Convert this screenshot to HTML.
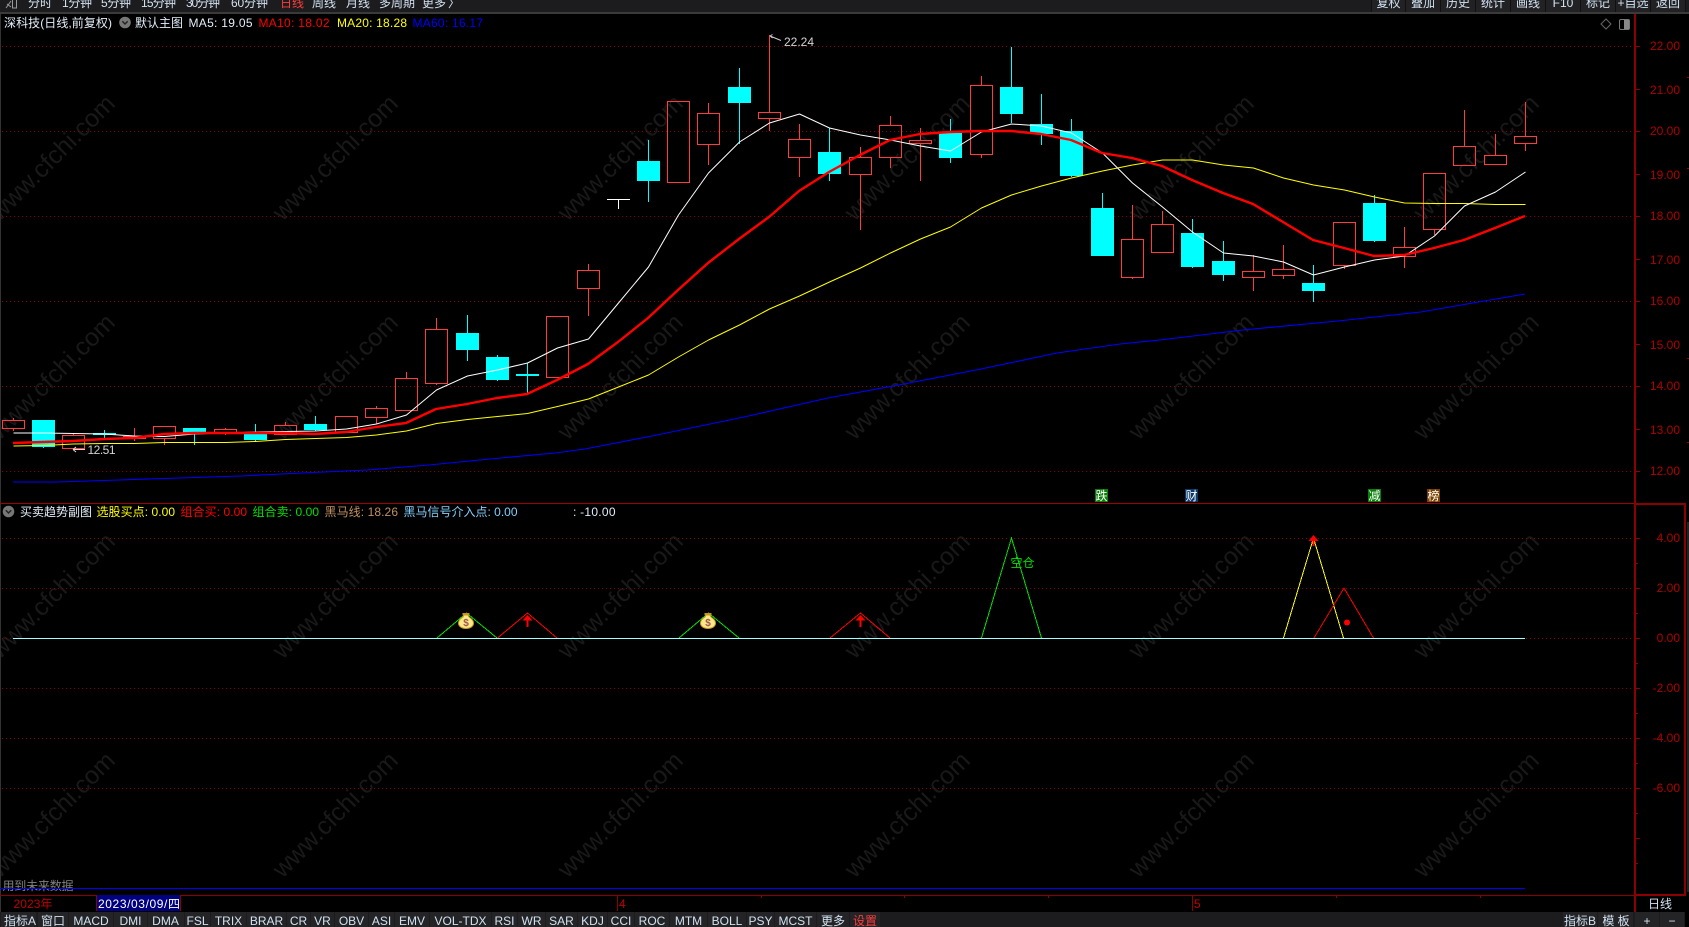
<!DOCTYPE html>
<html lang="zh">
<head>
<meta charset="utf-8">
<title>深科技</title>
<style>
html,body{margin:0;padding:0;background:#000;width:1689px;height:927px;overflow:hidden}
svg{display:block;position:absolute;left:0;top:0}
text{font-family:"Liberation Sans","Noto Sans CJK SC",sans-serif;font-size:12px;white-space:pre}
.wm text{font-size:25px;fill:#191919;text-anchor:middle}
.ax text{fill:#b00000;text-anchor:end}
.btn text{fill:#d2e2f2;text-anchor:middle}
.crisp{shape-rendering:crispEdges}
</style>
</head>
<body>
<svg width="1689" height="927" viewBox="0 0 1689 927" xmlns="http://www.w3.org/2000/svg">
<rect width="1689" height="927" fill="#000"/>

<!-- watermark -->
<g class="wm">
<text x="52" y="166" transform="rotate(-45 52 157.5)">www.cfchi.com</text>
<text x="335" y="166" transform="rotate(-45 335 157.5)">www.cfchi.com</text>
<text x="620" y="166" transform="rotate(-45 620 157.5)">www.cfchi.com</text>
<text x="907" y="166" transform="rotate(-45 907 157.5)">www.cfchi.com</text>
<text x="1191" y="166" transform="rotate(-45 1191 157.5)">www.cfchi.com</text>
<text x="1476" y="166" transform="rotate(-45 1476 157.5)">www.cfchi.com</text>
<text x="52" y="385" transform="rotate(-45 52 376.5)">www.cfchi.com</text>
<text x="335" y="385" transform="rotate(-45 335 376.5)">www.cfchi.com</text>
<text x="620" y="385" transform="rotate(-45 620 376.5)">www.cfchi.com</text>
<text x="907" y="385" transform="rotate(-45 907 376.5)">www.cfchi.com</text>
<text x="1191" y="385" transform="rotate(-45 1191 376.5)">www.cfchi.com</text>
<text x="1476" y="385" transform="rotate(-45 1476 376.5)">www.cfchi.com</text>
<text x="52" y="604" transform="rotate(-45 52 595.5)">www.cfchi.com</text>
<text x="335" y="604" transform="rotate(-45 335 595.5)">www.cfchi.com</text>
<text x="620" y="604" transform="rotate(-45 620 595.5)">www.cfchi.com</text>
<text x="907" y="604" transform="rotate(-45 907 595.5)">www.cfchi.com</text>
<text x="1191" y="604" transform="rotate(-45 1191 595.5)">www.cfchi.com</text>
<text x="1476" y="604" transform="rotate(-45 1476 595.5)">www.cfchi.com</text>
<text x="52" y="823" transform="rotate(-45 52 814.5)">www.cfchi.com</text>
<text x="335" y="823" transform="rotate(-45 335 814.5)">www.cfchi.com</text>
<text x="620" y="823" transform="rotate(-45 620 814.5)">www.cfchi.com</text>
<text x="907" y="823" transform="rotate(-45 907 814.5)">www.cfchi.com</text>
<text x="1191" y="823" transform="rotate(-45 1191 814.5)">www.cfchi.com</text>
<text x="1476" y="823" transform="rotate(-45 1476 814.5)">www.cfchi.com</text>
</g>

<!-- top bar -->
<rect x="0" y="0" width="1689" height="12" fill="#1c1c1e" class="crisp"/>
<rect x="0" y="12" width="1689" height="2" fill="#3a3a3a" class="crisp"/>
<rect x="0" y="14" width="1" height="898" fill="#333" class="crisp"/>
<path d="M6 8L11 1M7 4L11 7M12.5 0V8H16.5V0" fill="none" stroke="#999" stroke-width="1"/>
<g fill="#d2e2f2">
<text x="28" y="7">分时</text>
<text x="62" y="7" textLength="30">1分钟</text>
<text x="101" y="7" textLength="30">5分钟</text>
<text x="141" y="7" textLength="35">15分钟</text>
<text x="186" y="7" textLength="34">30分钟</text>
<text x="231" y="7" textLength="37">60分钟</text>
<text x="280" y="7" fill="#ff3c3c">日线</text>
<text x="312" y="7">周线</text>
<text x="346" y="7">月线</text>
<text x="379" y="7">多周期</text>
<text x="422" y="7">更多</text>
<text x="448" y="7">〉</text>
</g>
<g class="crisp">
<rect x="1372" y="0" width="313" height="12" fill="#222224"/>
<path d="M1371.5 0V12M1405.5 0V12M1440.5 0V12M1475.5 0V12M1510.5 0V12M1545.5 0V12M1580.5 0V12M1615.5 0V12M1650.5 0V12M1685.5 0V12" stroke="#101010" stroke-width="1" fill="none"/>
</g>
<g class="btn">
<text x="1388.5" y="7">复权</text>
<text x="1423" y="7">叠加</text>
<text x="1458" y="7">历史</text>
<text x="1493" y="7">统计</text>
<text x="1528" y="7">画线</text>
<text x="1563" y="7">F10</text>
<text x="1598" y="7">标记</text>
<text x="1633" y="7">+自选</text>
<text x="1668" y="7">返回</text>
</g>

<!-- header -->
<text x="4" y="27" fill="#e2eefa" textLength="108">深科技(日线,前复权)</text>
<circle cx="125" cy="22.5" r="5.8" fill="#777"/>
<path d="M122.3 21.3L125 24L127.7 21.3" fill="none" stroke="#222" stroke-width="1.4"/>
<text x="135" y="27" fill="#e2eefa">默认主图</text>
<text x="188.5" y="27" fill="#e2eefa" textLength="64">MA5: 19.05</text>
<text x="258.5" y="27" fill="#ff0000" textLength="71">MA10: 18.02</text>
<text x="337" y="27" fill="#ffff00" textLength="70">MA20: 18.28</text>
<text x="412.5" y="27" fill="#0000ff" textLength="70.5">MA60: 16.17</text>

<!-- diamond + panel icons -->
<path d="M1606 19L1611 24L1606 29L1601 24Z" fill="none" stroke="#666" stroke-width="1"/>
<rect x="1619.5" y="19.5" width="10" height="10" rx="1.5" fill="none" stroke="#777" stroke-width="1"/>
<rect x="1624" y="20" width="5" height="9" fill="#888"/>

<!-- grids -->
<g stroke="#8a0000" stroke-width="1" stroke-dasharray="1 3" fill="none" class="crisp">
<path d="M2 46.5H1634M2 131.5H1634M2 216.5H1634M2 301.5H1634M2 386.5H1634M2 471.5H1634"/>
<path d="M2 538.5H1634M2 588.5H1634M2 638.5H1634M2 688.5H1634M2 738.5H1634M2 788.5H1634"/>
</g>

<!-- red hollow candles -->
<path class="crisp" fill="none" stroke="#ff3c3c" stroke-width="1" d="
M13.5 418V420M13.5 429V431M2.5 420.5H24.5V428.5H2.5Z
M73.5 433V435M62.5 435.5H84.5V448.5H62.5Z
M134.5 428V436M134.5 439V441M123.5 436.5H145.5V438.5H123.5Z
M164.5 438V445M153.5 426.5H175.5V438.5H153.5Z
M225.5 428V429M225.5 433V435M214.5 429.5H236.5V432.5H214.5Z
M285.5 422V425M274.5 425.5H296.5V434.5H274.5Z
M335.5 416.5H357.5V432.5H335.5Z
M376.5 406V408M376.5 417V424M365.5 408.5H387.5V417.5H365.5Z
M406.5 372V378M395.5 378.5H417.5V410.5H395.5Z
M436.5 318V329M436.5 384V385M425.5 329.5H447.5V383.5H425.5Z
M546.5 316.5H568.5V377.5H546.5Z
M588.5 264V270M588.5 289V316M577.5 270.5H599.5V288.5H577.5Z
M667.5 101.5H689.5V182.5H667.5Z
M708.5 103V113M708.5 145V165M697.5 113.5H719.5V144.5H697.5Z
M769.5 35V112M769.5 119V131M758.5 112.5H780.5V118.5H758.5Z
M799.5 124V139M799.5 158V177M788.5 139.5H810.5V157.5H788.5Z
M860.5 147V157M860.5 175V230M849.5 157.5H871.5V174.5H849.5Z
M890.5 116V125M890.5 158V168M879.5 125.5H901.5V157.5H879.5Z
M920.5 128V140M920.5 144V181M909.5 140.5H931.5V143.5H909.5Z
M981.5 76V85M981.5 155V158M970.5 85.5H992.5V154.5H970.5Z
M1132.5 205V239M1132.5 278V279M1121.5 239.5H1143.5V277.5H1121.5Z
M1162.5 211V224M1151.5 224.5H1173.5V252.5H1151.5Z
M1253.5 255V271M1253.5 278V291M1242.5 271.5H1264.5V277.5H1242.5Z
M1283.5 245V269M1283.5 276V279M1272.5 269.5H1294.5V275.5H1272.5Z
M1344.5 266V269M1333.5 222.5H1355.5V265.5H1333.5Z
M1404.5 227V247M1404.5 257V268M1393.5 247.5H1415.5V256.5H1393.5Z
M1434.5 230V235M1423.5 173.5H1445.5V229.5H1423.5Z
M1464.5 110V146M1453.5 146.5H1475.5V165.5H1453.5Z
M1495.5 134V155M1484.5 155.5H1506.5V164.5H1484.5Z
M1525.5 102V136M1525.5 144V151M1514.5 136.5H1536.5V143.5H1514.5Z"/>

<!-- cyan wicks -->
<path class="crisp" fill="none" stroke="#00ffff" stroke-width="1" d="
M43.5 420V448M104.5 430V439M194.5 428V445M255.5 424V442M315.5 416V431
M467.5 315V361M497.5 355V381M527.5 363V393M648.5 140V202M739.5 68V144
M829.5 128V181M950.5 119V163M1011.5 47V123M1041.5 94V145M1071.5 119V177
M1102.5 193V256M1192.5 219V268M1223.5 241V281M1313.5 265V302M1374.5 195V242"/>
<!-- cyan bodies -->
<g fill="#00ffff" class="crisp">
<rect x="32" y="420" width="23" height="27"/>
<rect x="93" y="433" width="23" height="2"/>
<rect x="183" y="428" width="23" height="5"/>
<rect x="244" y="434" width="23" height="6"/>
<rect x="304" y="424" width="23" height="6"/>
<rect x="456" y="333" width="23" height="17"/>
<rect x="486" y="357" width="23" height="23"/>
<rect x="516" y="374" width="23" height="2"/>
<rect x="637" y="161" width="23" height="20"/>
<rect x="728" y="87" width="23" height="16"/>
<rect x="818" y="152" width="23" height="22"/>
<rect x="939" y="133" width="23" height="25"/>
<rect x="1000" y="87" width="23" height="27"/>
<rect x="1030" y="124" width="23" height="10"/>
<rect x="1060" y="131" width="23" height="45"/>
<rect x="1091" y="208" width="23" height="48"/>
<rect x="1181" y="233" width="23" height="34"/>
<rect x="1212" y="261" width="23" height="14"/>
<rect x="1302" y="283" width="23" height="8"/>
<rect x="1363" y="203" width="23" height="38"/>
</g>
<!-- T doji -->
<path class="crisp" d="M607 199.5H630M618.5 199V209" stroke="#fff" stroke-width="1" fill="none"/>

<!-- MA lines -->
<polyline fill="none" stroke="#0000ff" stroke-width="1.1" stroke-linejoin="round" points="13,482 57,482 119,480 180,478 241,476 302,473 367,470 429,465 490,459 555,453 585,449 652,436 744,417 828,398 904,384 981,369 1057,353 1120,344 1160,340 1243,330 1338,321 1421,312 1490,300 1525,294"/>
<polyline fill="none" stroke="#ffff00" stroke-width="1" stroke-linejoin="round" points="13.5,446 43.5,445.5 73.5,444 104.5,443.5 134.5,443.5 164.5,442.5 194.5,442.5 225.5,442.5 255.5,441.5 285.5,439.5 315.5,438.5 346.5,437.5 376.5,435 406.5,431 436.5,423.5 467.5,419.5 497.5,416.5 527.5,413.5 557.5,406.5 588.5,399 618.5,387 648.5,375 678.5,357 708.5,340 739.5,325 769.5,309 799.5,296 829.5,282 860.5,268 890.5,253 920.5,239 950.5,227 981.5,208 1011.5,195 1041.5,186 1071.5,178 1102.5,171 1132.5,165 1162.5,160 1192.5,160 1223.5,165 1253.5,168 1283.5,178 1313.5,185 1344.5,190 1374.5,197 1404.5,203 1434.5,203.5 1464.5,203.5 1495.5,204.5 1525.5,204.5"/>
<polyline fill="none" stroke="#ffffff" stroke-width="1" stroke-linejoin="round" points="13.5,433 43.5,433 73.5,433.5 104.5,434 134.5,436 164.5,436.5 194.5,434 225.5,433 255.5,432 285.5,431.5 315.5,431 346.5,429 376.5,424 406.5,415 436.5,390 467.5,376 497.5,370 527.5,363 557.5,348 588.5,339 618.5,303 648.5,267 678.5,215 708.5,173 739.5,142 769.5,123 799.5,114 829.5,128 860.5,135 890.5,140 920.5,146 950.5,151 981.5,132 1011.5,124 1041.5,126 1071.5,133 1102.5,153 1132.5,183 1162.5,207 1192.5,232 1223.5,253 1253.5,256 1283.5,262 1313.5,275 1344.5,267 1374.5,260 1404.5,256 1434.5,236 1464.5,206 1495.5,192 1525.5,172"/>
<polyline fill="none" stroke="#ff0000" stroke-width="2.4" stroke-linejoin="round" points="13,443 43,442 73,441 104,439 134,438 164,434 194,433 225,433 255,433 285,433 315,434 346,432 376,427 406,423 436,409 467,404 497,398 527,394 557,380 588,364 618,342 648,318 678,290 708,263 739,239 769,217 799,191 829,172 860,155 890,140 920,134 950,132 981,131 1011,131 1041,134 1071,140 1102,153 1132,158 1162,166 1192,180 1223,193 1253,204 1283,222 1313,240 1344,248 1374,256 1404,255 1434,248 1464,240 1495,228 1525,216"/>

<!-- max/min labels -->
<path d="M770 36L781 40.5M770 36L772.5 34.5M770 36L772.5 38" fill="none" stroke="#ccc" stroke-width="1"/>
<text x="784" y="46" fill="#d4d4d4" textLength="30">22.24</text>
<path d="M73 449.5H85M73 449.5L76 447M73 449.5L76 452" fill="none" stroke="#ddd" stroke-width="1"/>
<text x="87.5" y="454" fill="#d4d4d4" textLength="28">12.51</text>

<!-- event badges -->
<g class="crisp">
<rect x="1095" y="489" width="13" height="13" fill="#0a800a"/>
<rect x="1185" y="489" width="13" height="13" fill="#0a3a6a"/>
<rect x="1368" y="489" width="13" height="13" fill="#0a800a"/>
<rect x="1427" y="489" width="13" height="13" fill="#7a4000"/>
</g>
<g fill="#fff" text-anchor="middle">
<text x="1101.5" y="500">跌</text>
<text x="1191.5" y="500">财</text>
<text x="1374.5" y="500">减</text>
<text x="1433.5" y="500">榜</text>
</g>

<!-- panel divider -->
<rect x="0" y="503" width="1635" height="1" fill="#a00000" class="crisp"/>

<!-- sub header -->
<circle cx="8.5" cy="511.5" r="5.8" fill="#777"/>
<path d="M5.8 510.3L8.5 513L11.2 510.3" fill="none" stroke="#222" stroke-width="1.4"/>
<text x="20" y="516" fill="#e2eefa">买卖趋势副图</text>
<text x="96.5" y="516" fill="#ffff00" textLength="78.5">选股买点: 0.00</text>
<text x="180.5" y="516" fill="#ff0000" textLength="66.5">组合买: 0.00</text>
<text x="252.5" y="516" fill="#00e000" textLength="66.5">组合卖: 0.00</text>
<text x="324.5" y="516" fill="#c09060" textLength="73.5">黑马线: 18.26</text>
<text x="403.5" y="516" fill="#80d0ff" textLength="114">黑马信号介入点: 0.00</text>
<text x="573" y="516" fill="#e2eefa" textLength="42.5">: -10.00</text>

<!-- sub chart triangles -->
<g fill="none" stroke-width="1" class="crisp">
<polyline stroke="#00e000" points="437,638 466.5,613 497,638"/>
<polyline stroke="#ff0000" points="497.5,638 527.5,613 557,638"/>
<polyline stroke="#00e000" points="679,638 708.5,613 739,638"/>
<polyline stroke="#ff0000" points="830,638 860.5,613 890,638"/>
<polyline stroke="#00e000" points="981.5,638 1011.5,538 1041.5,638"/>
<polyline stroke="#ffff00" points="1283.5,638 1313.5,538 1343.5,638"/>
<polyline stroke="#ff0000" points="1314,638 1344,588 1373.5,638"/>
</g>
<rect x="13" y="638" width="1512" height="1" fill="#a0ffff" class="crisp"/>

<!-- red arrows -->
<path d="M527.5 615L532.5 620.5H528.5V627H526.5V620.5H522.5Z" fill="#ff0000"/>
<path d="M860.5 615L865.5 620.5H861.5V627H859.5V620.5H855.5Z" fill="#ff0000"/>
<path d="M1313.5 535L1318.5 541H1314.5V546H1312.5V541H1308.5Z" fill="#ff0000"/>
<circle cx="1347" cy="622.5" r="3" fill="#ff0000"/>

<!-- money bags -->
<g>
<rect x="462.5" y="613" width="7" height="2" fill="#c89020"/>
<path d="M464 615H468L469 617C472 619 473.5 621 473.5 623C473.5 626.5 470 628.5 466 628.5C462 628.5 458.5 626.5 458.5 623C458.5 621 460 619 463 617Z" fill="#ffe88a" stroke="#d09a20" stroke-width="1"/>
<text x="466" y="626" fill="#9a5a50" text-anchor="middle" style="font-size:10px;font-weight:bold">$</text>
<rect x="704.5" y="613" width="7" height="2" fill="#c89020"/>
<path d="M706 615H710L711 617C714 619 715.5 621 715.5 623C715.5 626.5 712 628.5 708 628.5C704 628.5 700.5 626.5 700.5 623C700.5 621 702 619 705 617Z" fill="#ffe88a" stroke="#d09a20" stroke-width="1"/>
<text x="708" y="626" fill="#9a5a50" text-anchor="middle" style="font-size:10px;font-weight:bold">$</text>
</g>
<text x="1010.5" y="567" fill="#00e000" textLength="24">空仓</text>

<!-- bottom blue line + warning -->
<text x="2.5" y="890" fill="#808080" textLength="71">用到未来数据</text>
<rect x="0" y="888" width="1525" height="1" fill="#0000ff" class="crisp"/>

<!-- axis frame -->
<g fill="#8b0000" class="crisp">
<rect x="1634" y="14" width="2" height="898"/>
<rect x="1634" y="503" width="52" height="2"/>
<rect x="1684" y="503" width="2" height="393"/>
<rect x="0" y="895" width="1686" height="1"/>
<rect x="1634" y="894" width="52" height="2"/>
<rect x="1636" y="46" width="4" height="1"/><rect x="1636" y="89" width="4" height="1"/><rect x="1636" y="131" width="4" height="1"/><rect x="1636" y="174" width="4" height="1"/><rect x="1636" y="216" width="4" height="1"/><rect x="1636" y="259" width="4" height="1"/><rect x="1636" y="301" width="4" height="1"/><rect x="1636" y="344" width="4" height="1"/><rect x="1636" y="386" width="4" height="1"/><rect x="1636" y="429" width="4" height="1"/><rect x="1636" y="471" width="4" height="1"/>
<rect x="1636" y="538" width="4" height="1"/><rect x="1636" y="563" width="2" height="1"/><rect x="1636" y="588" width="4" height="1"/><rect x="1636" y="613" width="2" height="1"/><rect x="1636" y="638" width="4" height="1"/><rect x="1636" y="663" width="2" height="1"/><rect x="1636" y="688" width="4" height="1"/><rect x="1636" y="713" width="2" height="1"/><rect x="1636" y="738" width="4" height="1"/><rect x="1636" y="763" width="2" height="1"/><rect x="1636" y="788" width="4" height="1"/><rect x="1636" y="813" width="2" height="1"/><rect x="1636" y="838" width="4" height="1"/><rect x="1636" y="863" width="2" height="1"/>
<rect x="1687" y="77" width="2" height="1"/><rect x="1687" y="168" width="2" height="1"/><rect x="1687" y="358" width="2" height="1"/><rect x="1687" y="442" width="2" height="1"/>
</g>
<rect x="1687" y="522" width="2" height="370" fill="#222" class="crisp"/>

<!-- axis labels -->
<g class="ax">
<text x="1680" y="50">22.00</text>
<text x="1680" y="94">21.00</text>
<text x="1680" y="135">20.00</text>
<text x="1680" y="179">19.00</text>
<text x="1680" y="220">18.00</text>
<text x="1680" y="264">17.00</text>
<text x="1680" y="305">16.00</text>
<text x="1680" y="349">15.00</text>
<text x="1680" y="390">14.00</text>
<text x="1680" y="434">13.00</text>
<text x="1680" y="475">12.00</text>
<text x="1680" y="542">4.00</text>
<text x="1680" y="592">2.00</text>
<text x="1680" y="642">0.00</text>
<text x="1680" y="692">-2.00</text>
<text x="1680" y="742">-4.00</text>
<text x="1680" y="792">-6.00</text>
</g>

<!-- date row -->
<text x="13.5" y="908" fill="#c00000" textLength="39">2023年</text>
<rect x="96" y="895" width="85" height="16" fill="#000080" class="crisp"/>
<rect x="96" y="895" width="1" height="16" fill="#8b0000" class="crisp"/>
<rect x="180" y="895" width="1" height="16" fill="#8b0000" class="crisp"/>
<text x="98" y="908" fill="#fff" textLength="82">2023/03/09/四</text>
<g fill="#8b0000" class="crisp">
<rect x="617" y="896" width="1" height="15"/>
<rect x="761" y="896" width="1" height="2"/>
<rect x="904" y="896" width="1" height="2"/>
<rect x="1048" y="896" width="1" height="2"/>
<rect x="1192" y="896" width="1" height="15"/>
<rect x="1336" y="896" width="1" height="2"/>
<rect x="1480" y="896" width="1" height="2"/>
</g>
<text x="619" y="908" fill="#c00000">4</text>
<text x="1194" y="908" fill="#c00000">5</text>
<text x="1648" y="908" fill="#d2e2f2" textLength="24">日线</text>

<!-- bottom bar -->
<rect x="0" y="912" width="1685" height="15" fill="#1c1c1e" class="crisp"/>
<rect x="1685" y="912" width="4" height="15" fill="#000" class="crisp"/>
<g fill="#242426" class="crisp">
<rect x="1" y="912" width="35" height="15"/><rect x="38" y="912" width="30" height="15"/><rect x="69" y="912" width="44" height="15"/><rect x="114" y="912" width="33" height="15"/><rect x="148" y="912" width="36" height="15"/><rect x="185" y="912" width="25" height="15"/><rect x="211" y="912" width="35" height="15"/><rect x="247" y="912" width="39" height="15"/><rect x="287" y="912" width="23" height="15"/><rect x="311" y="912" width="23" height="15"/><rect x="335" y="912" width="33" height="15"/><rect x="369" y="912" width="25" height="15"/><rect x="395" y="912" width="34" height="15"/><rect x="430" y="912" width="61" height="15"/><rect x="492" y="912" width="25" height="15"/><rect x="518" y="912" width="27" height="15"/><rect x="546" y="912" width="31" height="15"/><rect x="578" y="912" width="29" height="15"/><rect x="608" y="912" width="26" height="15"/><rect x="635" y="912" width="34" height="15"/><rect x="670" y="912" width="37" height="15"/><rect x="708" y="912" width="38" height="15"/><rect x="747" y="912" width="27" height="15"/><rect x="775" y="912" width="41" height="15"/><rect x="817" y="912" width="32" height="15"/><rect x="850" y="912" width="30" height="15"/><rect x="1563" y="912" width="34" height="15"/><rect x="1598" y="912" width="35" height="15"/><rect x="1635" y="912" width="24" height="15"/><rect x="1660" y="912" width="24" height="15"/>
</g>
<g class="btn">
<text x="20" y="925">指标A</text>
<text x="53" y="925">窗口</text>
<text x="91" y="925">MACD</text>
<text x="130.5" y="925">DMI</text>
<text x="165.5" y="925">DMA</text>
<text x="197.5" y="925">FSL</text>
<text x="228.5" y="925">TRIX</text>
<text x="266.5" y="925">BRAR</text>
<text x="298.5" y="925">CR</text>
<text x="322.5" y="925">VR</text>
<text x="351.5" y="925">OBV</text>
<text x="381.5" y="925">ASI</text>
<text x="412" y="925">EMV</text>
<text x="460.5" y="925">VOL-TDX</text>
<text x="504.5" y="925">RSI</text>
<text x="531.5" y="925">WR</text>
<text x="561.5" y="925">SAR</text>
<text x="592.5" y="925">KDJ</text>
<text x="621" y="925">CCI</text>
<text x="652" y="925">ROC</text>
<text x="688.5" y="925">MTM</text>
<text x="727" y="925">BOLL</text>
<text x="760.5" y="925">PSY</text>
<text x="795.5" y="925">MCST</text>
<text x="833" y="925">更多</text>
<text x="865" y="925" style="fill:#ff3c3c">设置</text>
<text x="1580" y="925">指标B</text>
<text x="1616" y="925">模 板</text>
<text x="1647" y="925">+</text>
<text x="1672" y="925">−</text>
</g>
</svg>
</body>
</html>
